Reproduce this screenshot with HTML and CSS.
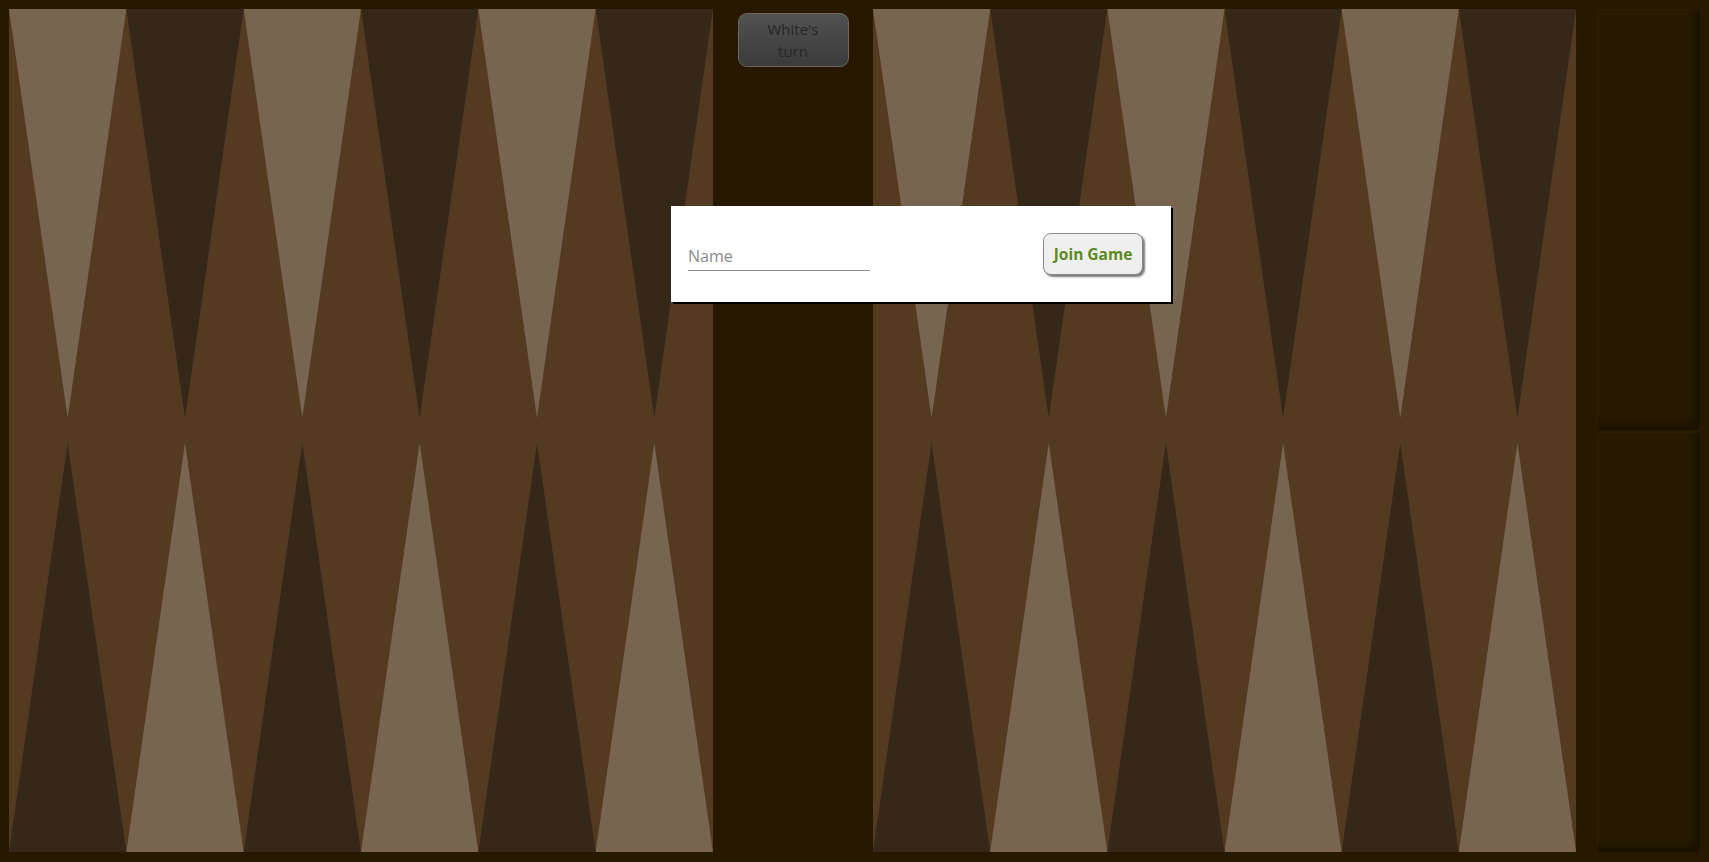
FILE: index.html
```html
<!DOCTYPE html>
<html>
<head>
<meta charset="utf-8">
<link rel="stylesheet" href="styles.css">
</head>
<body>
<div class="table">
  <div class="board">
    <div class="row top">
      <div class="pt light"></div><div class="pt dark"></div><div class="pt light"></div><div class="pt dark"></div><div class="pt light"></div><div class="pt dark"></div>
    </div>
    <div class="row bottom">
      <div class="pt dark"></div><div class="pt light"></div><div class="pt dark"></div><div class="pt light"></div><div class="pt dark"></div><div class="pt light"></div>
    </div>
  </div>
  <div class="bar">
    <div class="turn">White's<br>turn</div>
  </div>
  <div class="board right">
    <div class="row top">
      <div class="pt light"></div><div class="pt dark"></div><div class="pt light"></div><div class="pt dark"></div><div class="pt light"></div><div class="pt dark"></div>
    </div>
    <div class="row bottom">
      <div class="pt dark"></div><div class="pt light"></div><div class="pt dark"></div><div class="pt light"></div><div class="pt dark"></div><div class="pt light"></div>
    </div>
  </div>
  <div class="trays">
    <div class="tray"></div>
    <div class="tray"></div>
  </div>
</div>
<div class="dialog">
  <div class="field"><input class="name" type="text" placeholder="Name"></div>
  <button class="join">Join Game</button>
</div>
</body>
</html>
```
FILE: styles.css
```css
html, body {
  margin: 0;
  padding: 0;
  background: #261900;
  width: 1709px;
  height: 862px;
  overflow: hidden;
  font-family: "Open Sans", "Noto Sans", sans-serif;
}
.table {
  display: flex;
  box-sizing: border-box;
  height: 862px;
  padding: 9px 0 10px 9px;
}
.board {
  width: 704px;
  background: #553a22;
  display: flex;
  flex-direction: column;
  justify-content: space-between;
}
.board.right {
  width: 703px;
}
.row {
  display: flex;
  height: 409px;
}
.pt {
  flex: 1;
}
.top .pt {
  clip-path: polygon(0 0, 100% 0, 50% 100%);
}
.bottom .pt {
  clip-path: polygon(50% 0, 100% 100%, 0 100%);
}
.light {
  background: #776550;
}
.dark {
  background: #352818;
}
.bar {
  width: 160px;
  display: flex;
  flex-direction: column;
  align-items: center;
  padding-top: 4px;
  box-sizing: border-box;
}
.turn {
  width: 111px;
  height: 54px;
  box-sizing: border-box;
  border: 1px solid #6f6558;
  border-radius: 9px;
  background: linear-gradient(#515151, #3b3b3b);
  color: #262626;
  font-size: 15px;
  line-height: 22px;
  text-align: center;
  padding-top: 4px;
}
.trays {
  width: 124px;
  box-sizing: border-box;
  padding-left: 21px;
  display: flex;
  flex-direction: column;
  gap: 2px;
}
.tray {
  width: 103px;
  flex: 1;
  border-radius: 5px;
  background: #261900;
  box-shadow: inset -5px -5px 6px rgba(0,0,0,0.35), inset 1px 1px 2px rgba(70,50,20,0.4);
}
.dialog {
  position: absolute;
  left: 671px;
  top: 206px;
  width: 500px;
  height: 96px;
  box-sizing: border-box;
  background: #fff;
  box-shadow: 2px 2px 0 #000;
  display: flex;
  align-items: center;
  justify-content: space-between;
  padding: 0 28px 0 17px;
}
.field {
  display: flex;
}
.name {
  width: 182px;
  border: none;
  border-bottom: 1px solid #8c8c8c;
  outline: none;
  padding: 0 0 3px 0;
  margin: 8px 0 0 0;
  font-family: "Open Sans", "Noto Sans", sans-serif;
  font-size: 16px;
  line-height: 22px;
  color: #333;
  background: transparent;
}
.name::placeholder {
  color: #8a8a8a;
}
.join {
  width: 100px;
  height: 42px;
  margin-top: 0;
  box-sizing: border-box;
  border: 1px solid #8a8a8a;
  border-radius: 8px;
  background: #efefef;
  box-shadow: 2px 2px 2px #7a7a7a;
  color: #5b8a1f;
  font-family: "Open Sans", "Noto Sans", sans-serif;
  font-weight: bold;
  font-size: 15.5px;
  padding: 0;
}
```
